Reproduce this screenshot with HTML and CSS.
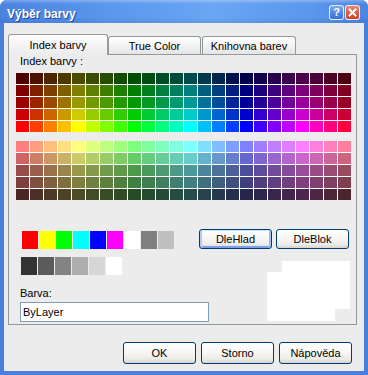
FILE: index.html
```html
<!DOCTYPE html>
<html lang="cs">
	<head>
		<meta charset="UTF-8">
		<title>Výběr barvy</title>
		<link rel="stylesheet" href="styles.css">
	</head>
	<body>
		<div class="window">
			<div class="titlebar">
				<span class="title">Výběr barvy</span>
				<span class="cap-btn cap-help">?</span>
				<span class="cap-btn cap-close">
					<svg width="13" height="13" viewBox="0 0 13 13">
						<path d="M3.5 3.5 L9.5 9.5 M9.5 3.5 L3.5 9.5" stroke="#fff" stroke-width="2" stroke-linecap="square"/>
					</svg>
				</span>
			</div>
			<div class="client">
				<div class="tabs">
					<div class="tab active">Index barvy</div>
					<div class="tab">True Color</div>
					<div class="tab tab-last">Knihovna barev</div>
				</div>
				<div class="pane">
					<div class="pane-label">Index barvy :</div>
					<div id="grid-full" class="aci-grid"></div>
					<div id="grid-pale" class="aci-grid grid-pale"></div>
					<div class="bottom">
						<div class="left-col">
							<div class="swatch-row std-row">
								<span class="sw c-red"></span>
								<span class="sw c-yellow"></span>
								<span class="sw c-green"></span>
								<span class="sw c-cyan"></span>
								<span class="sw c-blue"></span>
								<span class="sw c-magenta"></span>
								<span class="sw c-white"></span>
								<span class="sw c-gray8"></span>
								<span class="sw c-gray9"></span>
							</div>
							<div class="swatch-row gray-row">
								<span class="sw g-250"></span>
								<span class="sw g-251"></span>
								<span class="sw g-252"></span>
								<span class="sw g-253"></span>
								<span class="sw g-254"></span>
								<span class="sw g-255"></span>
							</div>
							<label class="barva-label" for="barva">Barva:</label>
							<input id="barva" class="barva-input" type="text" value="ByLayer">
						</div>
						<div class="right-col">
							<div class="by-buttons">
								<button class="xp-btn small focus">DleHlad</button>
								<button class="xp-btn small">DleBlok</button>
							</div>
							<div class="preview">
								<div class="pv pv-new"></div>
								<div class="pv pv-old"></div>
							</div>
						</div>
					</div>
				</div>
				<div class="footer">
					<button class="xp-btn">OK</button>
					<button class="xp-btn">Storno</button>
					<button class="xp-btn">Nápověda</button>
				</div>
			</div>
		</div>
		<script src="script.js"></script>
	</body>
</html>
```

FILE: styles.css
```css
body {
	margin: 0;
	width: 368px;
	height: 375px;
	overflow: hidden;
	background-color: #ffffff;
	font-family: 'Liberation Sans', Arial, sans-serif;
	font-size: 11px;
	color: #000;
}

.window {
	width: 368px;
	height: 375px;
	display: flex;
	flex-direction: column;
	background-color: #4a80dc;
	border-radius: 7px 7px 0 0;
	overflow: hidden;
}

.titlebar {
	height: 23px;
	flex-shrink: 0;
	display: flex;
	align-items: flex-start;
	padding: 0 8px 0 7px;
	background:
		linear-gradient(to bottom, rgba(255, 255, 255, 0.28) 0, rgba(255, 255, 255, 0) 4px, rgba(0, 0, 0, 0) 17px, rgba(0, 0, 60, 0.08) 100%),
		linear-gradient(to right, #4a83e0 0%, #5b97ec 30%, #6aa6f3 58%, #5a96eb 85%, #4b85e1 100%);
}

.title {
	flex-grow: 1;
	padding-top: 7px;
	line-height: 15px;
	font-size: 12px;
	font-weight: bold;
	color: #ffffff;
	text-shadow: 1px 1px 0 #1c4aa8;
}

.cap-btn {
	width: 13px;
	height: 13px;
	margin-top: 5px;
	border: 1px solid rgba(255, 255, 255, 0.85);
	border-radius: 3px;
	display: flex;
	align-items: center;
	justify-content: center;
	color: #ffffff;
	font-weight: bold;
	font-size: 11px;
	line-height: 13px;
}

.cap-help {
	background: linear-gradient(to bottom, #7eaaf0, #4f82e3 60%, #3d6fd8);
}

.cap-close {
	margin-left: 1px;
	background: linear-gradient(to bottom, #e88a72, #d9573c 60%, #c9442b);
}

.client {
	flex-grow: 1;
	margin: 0 4px 4px 4px;
	padding: 11px 0 0 4px;
	background-color: #ececec;
}

.tabs {
	display: flex;
	align-items: flex-end;
	height: 20px;
}

.tab {
	box-sizing: border-box;
	height: 18px;
	width: 93px;
	padding-top: 3px;
	line-height: 13px;
	text-align: center;
	border: 1px solid #919b9c;
	border-bottom: none;
	border-radius: 3px 3px 0 0;
	background: linear-gradient(to bottom, #ffffff, #f3f3f3 50%, #e4e4e4);
}

.tab.active {
	position: relative;
	z-index: 1;
	width: 100px;
	height: 21px;
	margin-bottom: -1px;
	padding-top: 4px;
	background: linear-gradient(to bottom, #fdfdfd, #f2f2f2 60%, #ececec);
}

.tab-last {
	width: 94px;
	margin-left: 1px;
}

.pane {
	box-sizing: border-box;
	width: 349px;
	height: 271px;
	border: 1px solid #919b9c;
	background-color: #ececec;
}

.pane-label {
	line-height: 13px;
	padding-left: 11px;
}

.aci-grid {
	display: grid;
	grid-template-columns: repeat(24, 13px);
	grid-auto-rows: 11px;
	gap: 1px;
	width: max-content;
	margin: 5px 0 0 7px;
	background-color: #ffffff;
}

.aci-grid.grid-pale {
	margin-top: 9px;
}

.bottom {
	display: flex;
}

.left-col {
	width: 190px;
	display: flex;
	flex-direction: column;
	align-items: flex-start;
}

.swatch-row {
	display: flex;
	gap: 1px;
}

.std-row {
	margin: 31px 0 0 13px;
}

.gray-row {
	margin: 8px 0 0 12px;
}

.sw {
	width: 16px;
	height: 18px;
}

.c-red { background-color: #ff0000; }
.c-yellow { background-color: #ffff00; }
.c-green { background-color: #00ff00; }
.c-cyan { background-color: #00ffff; }
.c-blue { background-color: #0000ff; }
.c-magenta { background-color: #ff00ff; }
.c-white { background-color: #ffffff; }
.c-gray8 { background-color: #808080; }
.c-gray9 { background-color: #c0c0c0; }

.g-250 { background-color: #333333; }
.g-251 { background-color: #5b5b5b; }
.g-252 { background-color: #848484; }
.g-253 { background-color: #adadad; }
.g-254 { background-color: #d6d6d6; }
.g-255 { background-color: #ffffff; }

.barva-label {
	margin: 12px 0 0 11px;
	line-height: 13px;
}

.barva-input {
	box-sizing: border-box;
	width: 189px;
	height: 20px;
	margin: 2px 0 0 11px;
	padding: 0 2px;
	border: 1px solid #7f9db9;
	background-color: #ffffff;
	font-family: inherit;
	font-size: 11px;
	color: #000;
	outline: none;
}

.right-col {
	display: flex;
	flex-direction: column;
}

.by-buttons {
	display: flex;
	gap: 4px;
	margin-top: 29px;
}

.preview {
	display: grid;
	margin: 12px 0 0 68px;
}

.pv {
	grid-area: 1 / 1;
	width: 68px;
	background-color: #ffffff;
}

.pv-new {
	height: 48px;
	margin-left: 15px;
}

.pv-old {
	height: 49px;
	margin-top: 11px;
}

.footer {
	display: flex;
	justify-content: flex-end;
	gap: 5px;
	margin-top: 17px;
	padding-right: 12px;
}

.xp-btn {
	box-sizing: border-box;
	width: 73px;
	height: 22px;
	padding: 0;
	border: 1px solid #003c74;
	border-radius: 3px;
	background: linear-gradient(to bottom, #ffffff 0%, #f7f7f5 45%, #ecebe7 80%, #d8d4cc 100%);
	font-family: inherit;
	font-size: 11px;
	color: #000;
}

.xp-btn.small {
	height: 20px;
}

.xp-btn.focus {
	box-shadow:
		inset 0 1px 0 #cee7ff,
		inset 2px 0 0 #b0cbf5,
		inset -2px 0 0 #9fbbee,
		inset 0 -2px 0 #7d9fe8;
}
```

FILE: script.js
```js
var LEVELS_UP = [0, 63, 127, 191];
var LEVELS_DOWN = [255, 191, 127, 63];
var FULL_ROWS = [0.3, 0.5, 0.6, 0.8, 1];
var PALE_ROWS = [1, 0.8, 0.6, 0.5, 0.3];

// base hue for ACI columns 10, 20, ... 240
function hueRgb(i) {
	var up = LEVELS_UP[i % 4];
	var down = LEVELS_DOWN[i % 4];
	switch (Math.floor(i / 4)) {
		case 0: return [255, up, 0];
		case 1: return [down, 255, 0];
		case 2: return [0, 255, up];
		case 3: return [0, down, 255];
		case 4: return [up, 0, 255];
		default: return [255, 0, down];
	}
}

function fillGrid(id, rows, pale) {
	var grid = document.getElementById(id);
	rows.forEach(function (k) {
		for (var i = 0; i < 24; i++) {
			var rgb = hueRgb(i).map(function (c) {
				if (pale) c = 255 - (255 - c) / 2;
				return Math.floor(c * k);
			});
			var cell = document.createElement('span');
			cell.style.backgroundColor = 'rgb(' + rgb.join(',') + ')';
			grid.appendChild(cell);
		}
	});
}

fillGrid('grid-full', FULL_ROWS, false);
fillGrid('grid-pale', PALE_ROWS, true);
```
